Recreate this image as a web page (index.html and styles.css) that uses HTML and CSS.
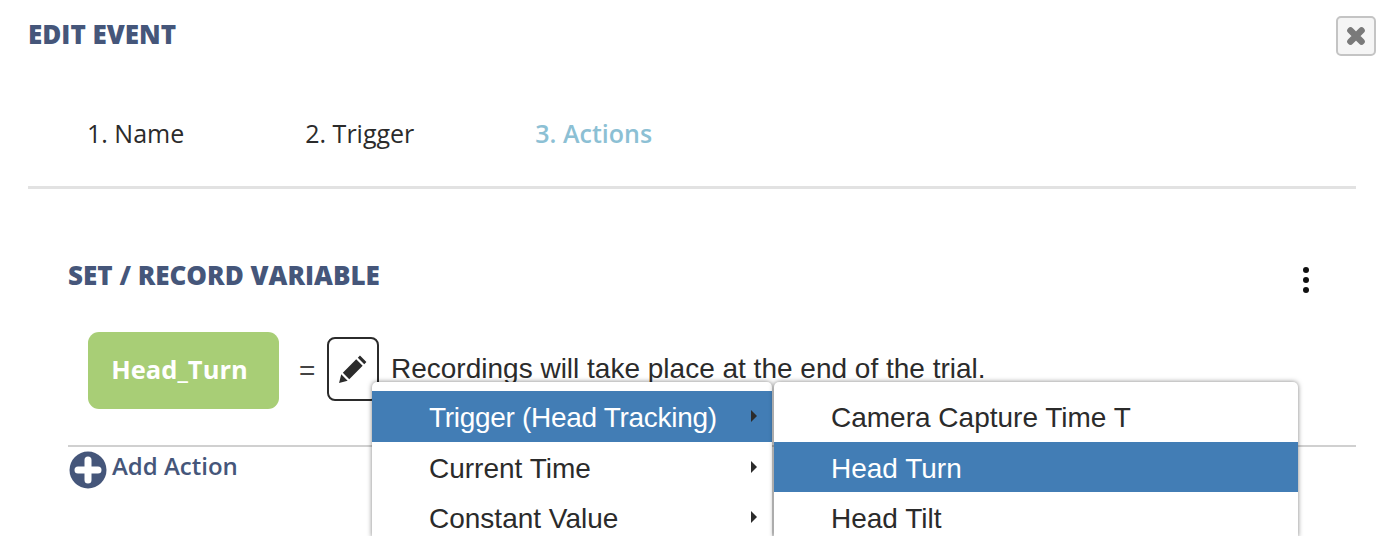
FILE: index.html
```html
<!DOCTYPE html>
<html lang="en">
<head>
    <meta charset="UTF-8">
    <title>Edit Event</title>
    <link rel="stylesheet" href="styles.css">
</head>
<body>
    <div class="dialog">
        <div class="dialog-head">
            <h2>EDIT EVENT</h2>
            <button class="close-btn" aria-label="Close">
                <svg width="22" height="22" viewBox="0 0 20 20"><path d="M5 5 15 15M15 5 5 15" stroke="#7a7a7a" stroke-width="6" stroke-linecap="round"/></svg>
            </button>
        </div>

        <div class="tabs">
            <span class="tab">1. Name</span>
            <span class="tab">2. Trigger</span>
            <span class="tab active">3. Actions</span>
        </div>

        <div class="action">
            <div class="action-head">
                <h3>SET / RECORD VARIABLE</h3>
                <div class="dots"><i></i><i></i><i></i></div>
            </div>
            <div class="action-row">
                <div class="var-pill">Head_Turn</div>
                <span class="equals">=</span>
                <button class="edit-btn" aria-label="Edit">
                    <svg width="30" height="30" viewBox="0 0 28 28"><path d="M1 27 3 19 9 25ZM4.500 17.500 17 5 23 11 10.500 23.500ZM18.500 3.500 20.500 1.500 26.500 7.500 24.500 9.500Z" fill="#2b2b2b"/></svg>
                </button>
                <span class="note">Recordings will take place at the end of the trial.</span>
            </div>
            <div class="add-action">
                <svg width="38" height="38" viewBox="0 0 38 38"><circle cx="19" cy="19" r="18.500" fill="#45567a"/><path d="M19 9V29M9 19H29" stroke="#fff" stroke-width="7" stroke-linecap="round"/></svg>
                <span>Add Action</span>
            </div>

            <ul class="menu menu-main">
                <li class="on tight">Trigger (Head Tracking)<b class="arrow"></b></li>
                <li>Current Time<b class="arrow"></b></li>
                <li>Constant Value<b class="arrow"></b></li>
            </ul>
            <ul class="menu menu-sub">
                <li>Camera Capture Time T</li>
                <li class="on">Head Turn</li>
                <li>Head Tilt</li>
            </ul>
        </div>
    </div>
</body>
</html>
```

FILE: styles.css
```css
:root {
    --navy: #45567a;
    --blue: #427db5;
    --text: #2b2b2b;
    --head-font: "Open Sans", Lato, sans-serif;
    --menu-font: "Liberation Sans", Arial, sans-serif;
}

html, body {
    height: 536px;
    overflow: hidden;
}

body {
    margin: 0;
    background: #fff;
    color: var(--text);
    font-family: var(--head-font);
}

.dialog {
    padding: 15px 30px 0 28px;
}

.dialog-head {
    display: flex;
    justify-content: space-between;
    align-items: flex-start;
}

h2 {
    margin: 0;
    padding-top: 3px;
    font-size: 26px;
    line-height: 32px;
    font-weight: 800;
    color: var(--navy);
}

.close-btn {
    width: 40px;
    height: 40px;
    margin: 1px -20px 0 0;
    padding: 0;
    display: flex;
    align-items: center;
    justify-content: center;
    background: #f5f5f5;
    border: 2px solid #c4c4c4;
    border-radius: 5px;
}

.tabs {
    display: flex;
    padding: 60px 0 0 59px;
    height: 70px;
    border-bottom: 3px solid #e2e2e2;
    font-size: 25px;
    line-height: 34px;
}

.tab {
    margin-right: 121px;
}

.tab.active {
    color: #8cc0d4;
    font-weight: 600;
}

.action {
    position: relative;
    padding: 0 0 0 40px;
}

.action-head {
    display: flex;
    justify-content: space-between;
    align-items: center;
    padding-top: 68px;
}

h3 {
    margin: 0;
    font-size: 26px;
    line-height: 30px;
    font-weight: 800;
    color: var(--navy);
}

.dots {
    display: flex;
    flex-direction: column;
    gap: 4px;
    margin: 10px 47px 0 0;
}

.dots i {
    width: 6px;
    height: 6px;
    background: #111;
    border-radius: 50%;
}

.action-row {
    display: flex;
    align-items: center;
    padding: 39px 0 36px 20px;
    border-bottom: 2px solid #d0d0d0;
}

.var-pill {
    width: 183px;
    height: 74px;
    padding: 0 8px 3px 0;
    display: flex;
    align-items: center;
    justify-content: center;
    background: #a8ce76;
    color: #fff;
    border-radius: 11px;
    font-size: 25.500px;
    font-weight: 700;
}

.equals {
    width: 16px;
    margin: 0 12px 0 20px;
    font-family: var(--menu-font);
    font-size: 28px;
    color: #444;
}

.edit-btn {
    width: 52px;
    height: 64px;
    margin-bottom: 3px;
    padding: 0;
    display: flex;
    align-items: center;
    justify-content: center;
    background: #fff;
    border: 2px solid #2b2b2b;
    border-radius: 8px;
}

.note {
    margin: 0 0 4px 12px;
    font-family: var(--menu-font);
    font-size: 28px;
}

.add-action {
    display: flex;
    align-items: flex-start;
    gap: 5px;
    padding-top: 4px;
    margin-left: 1px;
    color: var(--navy);
    font-size: 24px;
    line-height: 30px;
    font-weight: 600;
}

.menu {
    position: absolute;
    top: 193px;
    margin: 0;
    padding: 9px 0 0;
    height: 155px;
    box-sizing: border-box;
    overflow: hidden;
    list-style: none;
    background: #fff;
    border-radius: 5px 5px 0 0;
    box-shadow: 0 0 5px rgba(0, 0, 0, 0.5);
    font-family: var(--menu-font);
    font-size: 28px;
}

.menu li {
    position: relative;
    height: 50.500px;
    box-sizing: border-box;
    padding: 2px 0 0 57px;
    line-height: 50px;
}

.menu li.on {
    background: var(--blue);
    color: #fff;
}

.menu li.tight {
    letter-spacing: -0.3px;
}

.menu-main {
    left: 344px;
    width: 400px;
}

.menu-sub {
    left: 746px;
    width: 524px;
}

.arrow {
    position: absolute;
    top: 19px;
    right: 15px;
    border-left: 6px solid #2b2b2b;
    border-top: 6px solid transparent;
    border-bottom: 6px solid transparent;
}
```
